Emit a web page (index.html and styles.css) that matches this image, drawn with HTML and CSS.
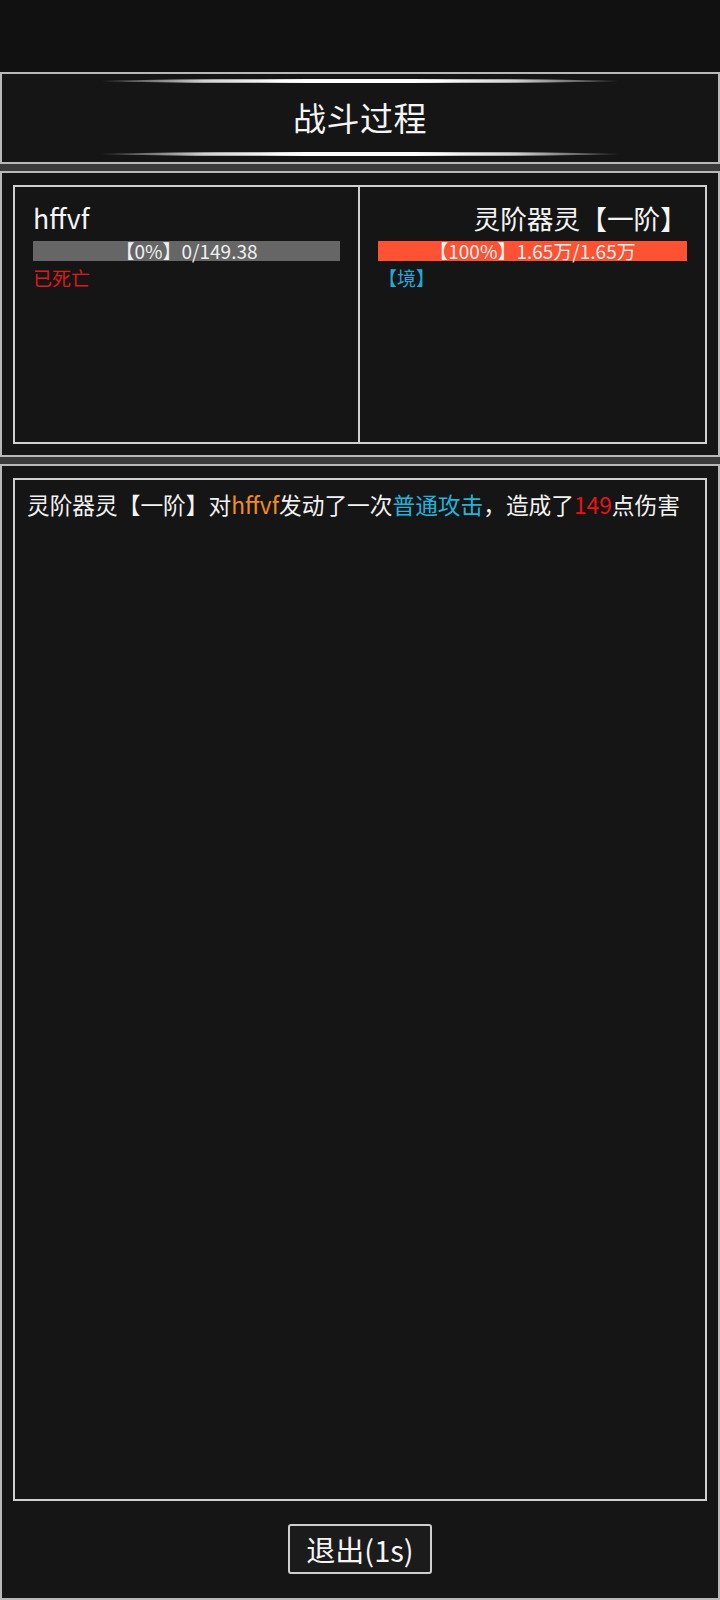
FILE: index.html
```html
<!DOCTYPE html>
<html lang="zh-CN">
<head>
<meta charset="utf-8">
<title>战斗过程</title>
<link rel="stylesheet" href="styles.css">
</head>
<body>
<div class="topbar"></div>
<div class="frame">
  <header class="box header">
    <div class="glow"></div>
    <h1 class="title">战斗过程</h1>
    <div class="glow"></div>
  </header>

  <section class="box status">
    <div class="status-inner">
      <div class="col col-left">
        <div class="name">hffvf</div>
        <div class="bar bar-dead">【0%】0/149.38</div>
        <div class="tag tag-dead">已死亡</div>
      </div>
      <div class="col col-right">
        <div class="name name-right">灵阶器灵【一阶】</div>
        <div class="bar bar-full">【100%】1.65万/1.65万</div>
        <div class="tag tag-realm">【境】</div>
      </div>
    </div>
  </section>

  <section class="box log">
    <div class="log-inner">
      <p class="log-line">灵阶器灵【一阶】对<span class="c-orange">hffvf</span>发动了一次<span class="c-cyan">普通攻击</span>，造成了<span class="c-red">149</span>点伤害</p>
    </div>
    <div class="actions">
      <button class="exit-btn">退出(1s)</button>
    </div>
  </section>
</div>
</body>
</html>
```

FILE: styles.css
```css
* { box-sizing: border-box; }

html, body {
  margin: 0;
  padding: 0;
  height: 100%;
}

body {
  background: #111111;
  color: #f2f2f2;
  font-family: "Noto Sans CJK SC", "Noto Sans", sans-serif;
  display: flex;
  flex-direction: column;
}

.topbar {
  height: 72px;
  background: #111111;
  flex: none;
}

.frame {
  flex: 1;
  display: flex;
  flex-direction: column;
  gap: 7px;
  background: #3a3a3a;
}

.box {
  background: #151515;
  border: 2px solid #b8b8b8;
}

/* header */
.header {
  padding: 5px 0 6px;
  display: flex;
  flex-direction: column;
  align-items: center;
}

.glow {
  width: 520px;
  height: 4px;
  border-radius: 50%;
  background: linear-gradient(90deg,
    rgba(255,255,255,0) 0%,
    rgba(170,170,170,0.45) 6%,
    rgba(230,230,230,0.9) 20%,
    #ffffff 35%,
    #ffffff 65%,
    rgba(230,230,230,0.9) 80%,
    rgba(170,170,170,0.45) 94%,
    rgba(255,255,255,0) 100%);
}

.title {
  margin: 0;
  height: 69px;
  line-height: 69px;
  font-size: 33px;
  font-weight: 400;
  color: #f4f4f4;
  letter-spacing: 0.5px;
}

/* status panel */
.status {
  padding: 12px 11px 11px;
}

.status-inner {
  height: 259px;
  border: 2px solid #d0d0d0;
  display: grid;
  grid-template-columns: 1fr 1fr;
}

.col {
  padding: 13px 18px 0;
}

.col-left {
  border-right: 2px solid #d0d0d0;
}

.name {
  font-size: 26.7px;
  line-height: 36px;
  height: 36px;
  color: #f4f4f4;
  white-space: nowrap;
}

.name-right {
  text-align: right;
}

.bar {
  margin-top: 5px;
  height: 20px;
  line-height: 20px;
  font-size: 19px;
  text-align: center;
  color: #f0f0f0;
  white-space: nowrap;
  overflow: visible;
}

.bar-dead { background: #666666; }
.bar-full { background: #ff5232; }

.tag {
  margin-top: 4px;
  font-size: 19px;
  line-height: 26px;
}

.tag-dead { color: #e01818; }
.tag-realm { color: #22a8d6; }

/* log */
.log {
  flex: 1;
  display: flex;
  flex-direction: column;
  padding: 12px 11px 0;
}

.log-inner {
  flex: 1;
  border: 2px solid #d0d0d0;
  padding: 8px 12px;
}

.log-line {
  margin: 0;
  font-size: 22.7px;
  line-height: 34px;
  color: #f2f2f2;
  white-space: nowrap;
}

.c-orange { color: #f28c1e; }
.c-cyan { color: #22b2dc; }
.c-red { color: #ea1212; }

.actions {
  display: flex;
  justify-content: center;
  padding: 23px 0 24px;
}

.exit-btn {
  height: 50px;
  padding: 0 16px;
  background: #1b1b1b;
  border: 2px solid #cfcfcf;
  border-radius: 3px;
  color: #f4f4f4;
  font-family: "Noto Sans CJK SC", "Noto Sans", sans-serif;
  font-size: 29px;
  line-height: 44px;
}
```
